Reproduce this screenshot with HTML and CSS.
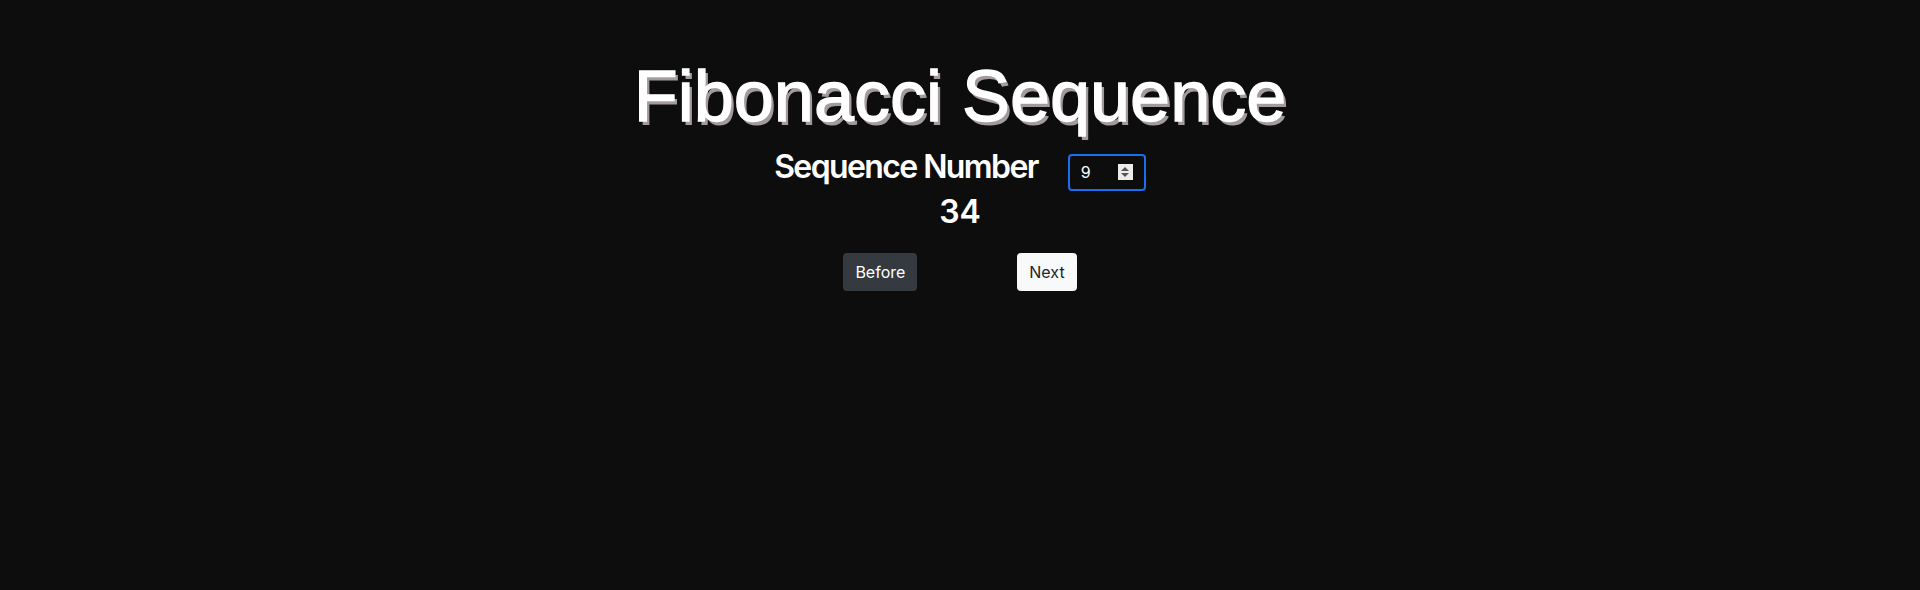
FILE: index.html
```html
<!DOCTYPE html>
<html lang="en">
<head>
<meta charset="utf-8">
<title>Fibonacci Sequence</title>
<link rel="stylesheet" href="styles.css">
</head>
<body>
<main class="app">
  <h1 class="title">Fibonacci Sequence</h1>
  <div class="seq-row">
    <label class="seq-label" for="seq">Sequence Number</label>
    <div class="num-field">
      <input id="seq" class="num-input" type="number" value="9">
      <span class="spinner" aria-hidden="true">
        <svg width="14" height="16" viewBox="0 0 14 16"><path d="M7 3 L11 7 L3 7 Z M7 13 L11 9 L3 9 Z" fill="#555"/></svg>
      </span>
    </div>
  </div>
  <div class="result">34</div>
  <div class="buttons">
    <button class="btn btn-dark" type="button">Before</button>
    <button class="btn btn-light" type="button">Next</button>
  </div>
</main>
</body>
</html>
```
FILE: styles.css
```css
html, body {
  margin: 0;
  padding: 0;
  background: #0d0d0d;
  color: #ffffff;
}
body {
  font-family: Inter, "Liberation Sans", sans-serif;
  height: 590px;
}
.app {
  display: flex;
  flex-direction: column;
  align-items: center;
  padding-top: 53px;
}
.title {
  margin: 0;
  font-family: "Liberation Sans", Arial, sans-serif;
  font-size: 72px;
  font-weight: 400;
  line-height: 1.2;
  color: #ffffff;
  -webkit-text-stroke: 1.3px #ffffff;
  text-shadow: 3px 4px 0 #a39b9b;
}
.seq-row {
  display: flex;
  align-items: baseline;
  gap: 30px;
  margin-top: 9px;
}
.seq-label {
  font-size: 32px;
  font-weight: 600;
  letter-spacing: -1.6px;
  line-height: 1.2;
}
.num-field {
  position: relative;
  display: flex;
}
.num-input {
  width: 78px;
  height: 37px;
  box-sizing: border-box;
  border: 2px solid #1a6ff0;
  border-radius: 4px;
  background: #0d0d0d;
  color: #ffffff;
  font-family: Inter, "Liberation Sans", sans-serif;
  font-size: 16px;
  padding: 0 0 0 11px;
  outline: none;
  -moz-appearance: textfield;
}
.num-input::-webkit-inner-spin-button,
.num-input::-webkit-outer-spin-button {
  -webkit-appearance: none;
  margin: 0;
}
.spinner {
  position: absolute;
  right: 13px;
  top: 10px;
  width: 15px;
  height: 16px;
  background: #ececec;
  display: flex;
  align-items: center;
  justify-content: center;
}
.result {
  font-size: 32px;
  font-weight: 600;
  line-height: 1.2;
  margin-top: 2px;
}
.buttons {
  display: flex;
  gap: 100px;
  margin-top: 22px;
}
.btn {
  font-family: Inter, "Liberation Sans", sans-serif;
  font-size: 16px;
  line-height: 24px;
  padding: 7px 12px;
  border: 0;
  border-radius: 4px;
}
.btn-dark {
  background: #343a40;
  color: #ffffff;
}
.btn-light {
  background: #f8f9fa;
  color: #212529;
}
```
